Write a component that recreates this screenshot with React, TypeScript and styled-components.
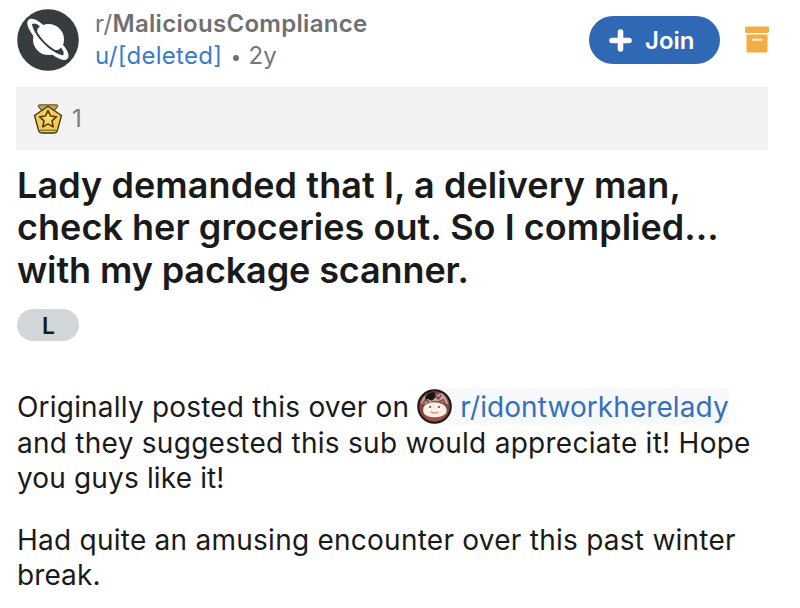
import React from 'react';
import styled, { createGlobalStyle } from 'styled-components';

const Global = createGlobalStyle`
  * { box-sizing: border-box; }
  body { margin: 0; background: #fff; font-family: Inter, sans-serif; color: #1a1a1b; }
`;
const Page = styled.main`
  width: 800px;
  height: 608px;
  overflow: hidden;
  padding: 9px 0 0 16px;
`;
const Header = styled.header`
  display: flex;
  height: 78px;
  width: 760px;
`;
const Avatar = styled.svg`
  width: 62px;
  height: 62px;
  margin-left: 1px;
  flex: none;
`;
const Meta = styled.div`
  margin: -1px 0 0 16px;
  width: 494px;
`;
const MetaLine = styled.div`
  display: flex;
  align-items: center;
  font-size: 24px;
  line-height: 32px;
  letter-spacing: 0.3px;
  color: #757677;
  white-space: pre;
`;
const UserLink = styled.a`
  color: #3a7bcb;
`;
const Strong = styled.span`
  font-weight: 600;
  color: #6f7071;
`;
const Dot = styled.span`
  width: 6px;
  height: 6px;
  margin: 3px 9px 0 11px;
  border-radius: 50%;
  background: #707172;
`;
const Join = styled.button`
  width: 131px;
  height: 48px;
  margin-top: 7px;
  border: 0;
  border-radius: 24px;
  background: #2f69b5;
  color: #fff;
  font: 600 24px Inter, sans-serif;
  display: flex;
  align-items: center;
  padding: 0 0 0 20px;
  gap: 13px;
`;
const PlusIcon = styled.svg`
  width: 23px;
  height: 23px;
`;
const Archive = styled.svg`
  width: 24px;
  height: 27px;
  margin: 17px 0 0 25px;
`;
const Awards = styled.section`
  width: 752px;
  height: 63px;
  background: #f2f2f2;
  display: flex;
  align-items: center;
  padding-left: 17px;
  gap: 9px;
  font-size: 24px;
  color: #7c7c7c;
`;
const AwardIcon = styled.svg`
  width: 30px;
  height: 30px;
`;
const Title = styled.h1`
  margin: 14px 0 0 1px;
  font-size: 36px;
  line-height: 42.4px;
  font-weight: 600;
  white-space: pre;
`;
const TitleLine = styled.span<{ $s: number }>`
  display: block;
  letter-spacing: ${p => p.$s}px;
`;
const Flair = styled.div`
  margin: 18px 0 0 1px;
  width: 62px;
  height: 32px;
  border-radius: 16px;
  background: #d2d6d9;
  font-size: 23px;
  font-weight: 600;
  display: flex;
  align-items: center;
  justify-content: center;
  padding: 1px 0 0 1px;
`;
const Para = styled.p`
  margin: 49px 0 0 1px;
  font-size: 28px;
  line-height: 35.5px;
  white-space: pre;
  & + & { margin-top: 26px; }
`;
const BodyLine = styled.span<{ $s: number }>`
  display: flex;
  height: 35.5px;
  letter-spacing: ${p => p.$s}px;
`;
const Mention = styled.a`
  display: flex;
  height: 37px;
  margin: -2px 0 0 8px;
  padding-top: 2px;
  width: 312px;
  gap: 8px;
  background: #f7f8f9;
  border-radius: 18px 3px 3px 18px;
  color: #3470bd;
  letter-spacing: 0.08px;
`;
const Face = styled.svg`
  width: 35px;
  height: 35px;
  margin-top: -1px;
  flex: none;
`;

const Planet = () => (
  <Avatar viewBox="0 0 62 62">
    <circle cx="31" cy="31" r="30.8" fill="#373c3f" />
    <circle cx="31.5" cy="30.5" r="15.5" fill="#fff" />
    <g transform="translate(30.8 30.5) rotate(45)">
      <path d="M-27.500 0C-27.500-5-20-6.800-12-7.200L12-7.200C20-6.800 27.500-5 27.500 0C27.500 5 16 8.500 0 8.500S-27.500 5-27.500 0Z" fill="#fff" />
      <path d="M-22 .5C-21.500-2.500-18-3.500-14.800-3.600C-15.500-1-14.500 1-12.500 2.300C-4 4.500 4 4.500 12.500 2.300C14.500 1 15.500-1 14.800-3.600C18-3.500 21.500-2.500 22 .5C15 4.800 7 5.700 0 5.700S-15 4.800-22 .5Z" fill="#373c3f" />
    </g>
  </Avatar>
);

const Medal = () => (
  <AwardIcon viewBox="0 0 30 30">
    <path d="M6 3.500Q4.500 .8 7 .8h16q2.500 0 1 2.700l-2 2H8Z" fill="#c9ab4b" stroke="#6a592c" strokeWidth="1.200" />
    <path d="M15 2.200 28.500 11.500 24.500 26Q24 29 21 29H9Q6 29 5.500 26L1.500 11.500Z" fill="#f1cd52" stroke="#3e321b" strokeWidth="1.300" strokeLinejoin="round" />
    <path d="M6.500 26.300h17" stroke="#8a6d24" strokeWidth="1.300" />
    <path d="m15 6.500 2.500 5.500 6 .7-4.500 4.200 1.200 6-5.200-3-5.200 3 1.200-6-4.500-4.200 6-.7Z" fill="#f8dc62" stroke="#573516" strokeWidth="1.600" strokeLinejoin="round" />
  </AwardIcon>
);

const Lady = () => (
  <Face viewBox="0 0 36 36">
    <circle cx="18" cy="18" r="16.8" fill="#86443f" stroke="#1c1718" strokeWidth="2" />
    <path d="M4 15Q5 9 11 5l6 3 8-4q6 4 7 12l-5-2-9-2-8 3Z" fill="#c5aa9f" />
    <path d="m6 14 4-3 2 3m7-7 3 3 3-4m-4 8 6-3 2 4" fill="none" stroke="#8c4f48" strokeWidth="2" />
    <path d="M9 7q3-4 9-4l1 6-4 3-4-2-3 1Z" fill="#181617" />
    <path d="M9 16q9-5 18 0 5 4 3 9-4 6-12 6T7 25q-2-5 2-9Z" fill="#fbf0e8" />
    <path d="M7 25q3 4 11 4t12-4q-4 8-12 8T7 25Z" fill="#a64e49" />
    <circle cx="13.500" cy="18.500" r="1.100" fill="#5c4642" />
    <circle cx="22.500" cy="18.500" r="1.100" fill="#5c4642" />
    <path d="M14 23.500q4 2.500 8 0" fill="none" stroke="#d39a88" strokeWidth="1.400" />
  </Face>
);

export default function App() {
  return (
    <>
      <Global />
      <Page>
        <Header>
          <Planet />
          <Meta>
            <MetaLine>r/<Strong>MaliciousCompliance</Strong></MetaLine>
            <MetaLine><UserLink>u/[deleted]</UserLink><Dot />2y</MetaLine>
          </Meta>
          <Join>
            <PlusIcon viewBox="0 0 23 23">
              <path d="M11.500 3v17M3 11.500h17" stroke="#fff" strokeWidth="5.600" strokeLinecap="round" />
            </PlusIcon>
            Join
          </Join>
          <Archive viewBox="0 0 24 27">
            <rect y="0.500" width="24" height="6.500" rx="1.500" fill="#f2ad45" />
            <path d="M1.500 8.500h21V25q0 1.500-1.500 1.500H3Q1.500 26.500 1.500 25Z" fill="#f2ad45" />
            <path d="M8 13.700h8.500" stroke="#fff5e2" strokeWidth="2" strokeLinecap="round" />
          </Archive>
        </Header>
        <Awards><Medal />1</Awards>
        <Title>
          <TitleLine $s={0.08}>Lady demanded that I, a delivery man,</TitleLine>
          <TitleLine $s={0.03}>check her groceries out. So I complied...</TitleLine>
          <TitleLine $s={-0.12}>with my package scanner.</TitleLine>
        </Title>
        <Flair>L</Flair>
        <Para>
          <BodyLine $s={0.2}>Originally posted this over on<Mention><Lady />r/idontworkherelady</Mention></BodyLine>
          <BodyLine $s={0.27}>and they suggested this sub would appreciate it! Hope</BodyLine>
          <BodyLine $s={0.15}>you guys like it!</BodyLine>
        </Para>
        <Para>
          <BodyLine $s={0.25}>Had quite an amusing encounter over this past winter</BodyLine>
          <BodyLine $s={0.1}>break.</BodyLine>
        </Para>
      </Page>
    </>
  );
}
